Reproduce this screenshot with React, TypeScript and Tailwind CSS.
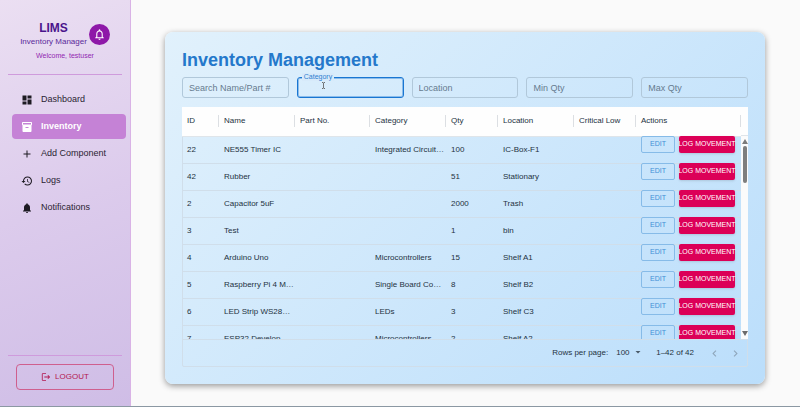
import React from 'react';
import {
  MdAdd,
  MdArrowDropDown,
  MdChevronLeft,
  MdChevronRight,
  MdDashboard,
  MdHistory,
  MdInventory2,
  MdLogout,
  MdNotifications,
  MdNotificationsNone,
} from 'react-icons/md';

type NavEntry = { label: string; icon: React.ReactNode; active?: boolean };

const navEntries: NavEntry[] = [
  { label: 'Dashboard', icon: <MdDashboard /> },
  { label: 'Inventory', icon: <MdInventory2 />, active: true },
  { label: 'Add Component', icon: <MdAdd /> },
  { label: 'Logs', icon: <MdHistory /> },
  { label: 'Notifications', icon: <MdNotifications /> },
];

const columns = [
  { label: 'ID', width: 'w-[37px]' },
  { label: 'Name', width: 'w-[76px]' },
  { label: 'Part No.', width: 'w-[75px]' },
  { label: 'Category', width: 'w-[76px]' },
  { label: 'Qty', width: 'w-[52px]' },
  { label: 'Location', width: 'w-[76px]' },
  { label: 'Critical Low', width: 'w-[62px]' },
  { label: 'Actions', width: 'w-[105px]' },
];

type Item = { id: number; name: string; category: string; qty: number; location: string };

const items: Item[] = [
  { id: 22, name: 'NE555 Timer IC', category: 'Integrated Circuit…', qty: 100, location: 'IC-Box-F1' },
  { id: 42, name: 'Rubber', category: '', qty: 51, location: 'Stationary' },
  { id: 2, name: 'Capacitor 5uF', category: '', qty: 2000, location: 'Trash' },
  { id: 3, name: 'Test', category: '', qty: 1, location: 'bin' },
  { id: 4, name: 'Arduino Uno', category: 'Microcontrollers', qty: 15, location: 'Shelf A1' },
  { id: 5, name: 'Raspberry Pi 4 M…', category: 'Single Board Co…', qty: 8, location: 'Shelf B2' },
  { id: 6, name: 'LED Strip WS28…', category: 'LEDs', qty: 3, location: 'Shelf C3' },
  { id: 7, name: 'ESP32 Develop…', category: 'Microcontrollers', qty: 2, location: 'Shelf A2' },
];

function Sidebar() {
  return (
    <aside className="flex w-[131px] shrink-0 flex-col border-r border-[#d9b3e6] bg-linear-160 from-[#ebdff2] via-[#dccbec] to-[#cfbde6]">
      <header className="mx-2 flex flex-col items-center border-b border-[#cf9bdc] pt-5 pb-3">
        <div className="flex items-center gap-[2px]">
          <div className="text-center">
            <div className="text-[12px] leading-4 font-bold text-[#4a148c]">LIMS</div>
            <div className="text-[8px] leading-3 text-[#5a2a9a]">Inventory Manager</div>
          </div>
          <button
            type="button"
            aria-label="Notifications"
            className="flex size-[21px] items-center justify-center rounded-full bg-[#8e18a8] text-[13px] text-white"
          >
            <MdNotificationsNone />
          </button>
        </div>
        <p className="mt-[2px] text-[7px] leading-3 text-[#9227b0]">Welcome, testuser</p>
      </header>
      <nav className="flex flex-col gap-[2px] pt-3 pr-1 pl-3">
        {navEntries.map((entry) => (
          <a
            key={entry.label}
            href="#"
            className={
              entry.active
                ? 'flex h-[25px] items-center gap-2 rounded bg-[#c582d6] px-[9px] pt-px text-[9px] font-bold text-white'
                : 'flex h-[25px] items-center gap-2 rounded px-[9px] pt-px text-[9px] text-[#2b2433]'
            }
          >
            <span className={entry.active ? 'text-[12px] text-white' : 'text-[12px] text-[#1d1a22]'}>{entry.icon}</span>
            {entry.label}
          </a>
        ))}
      </nav>
      <footer className="mx-2 mt-auto border-t border-[#cf9bdc] px-2 pt-2 pb-4">
        <button
          type="button"
          className="flex h-[26px] w-full items-center justify-center gap-1 rounded border border-[#cf5f8e] text-[8px] text-[#b3164f]"
        >
          <MdLogout className="text-[10px]" />
          LOGOUT
        </button>
      </footer>
    </aside>
  );
}

function FilterField({ label, focused }: { label: string; focused?: boolean }) {
  if (focused) {
    return (
      <label className="relative block">
        <span className="absolute -top-1 left-[5px] bg-[#d7eafa] px-[2px] text-[7px] leading-2 text-[#2f7fd1]">{label}</span>
        <input
          type="text"
          className="block h-[21px] w-full cursor-text rounded-[3px] border border-[#1976d2] px-[6px] text-[9px] ring-1 ring-[#1976d2]/40 outline-none ring-inset"
        />
        <svg viewBox="0 0 5 7" className="absolute top-[5px] left-[24px] h-[7px] w-[5px]" fill="none" stroke="#555" strokeWidth="0.8">
          <path d="M1 .5h1l.5.5.5-.5h1M2.500 1v5M1 6.500h1l.5-.5.5.5h1" />
        </svg>
      </label>
    );
  }
  return (
    <input
      type="text"
      aria-label={label}
      placeholder={label}
      className="block h-[21px] w-full min-w-0 rounded-[3px] border border-[#b1c8da] px-[6px] text-[9px] text-[#243444] outline-none placeholder:text-[#667b8f]"
    />
  );
}

function InventoryTable() {
  return (
    <section className="rounded-[2px] border border-[#d0deea] text-[8px] text-[#24323f]">
      <div className="-mx-px -mt-px flex h-[232px] overflow-hidden">
        <table className="h-fit min-w-0 flex-1 table-fixed border-collapse">
          <thead>
            <tr className="h-[29px] border-b border-[#dfe5ea] bg-[#fefefe]">
              {columns.map((column) => (
                <th key={column.label} scope="col" className={`${column.width} p-0 text-left font-medium whitespace-nowrap`}>
                  <span className="block border-r border-[#dcdfe3] pl-[5px] leading-3">{column.label}</span>
                </th>
              ))}
            </tr>
          </thead>
          <tbody>
            {items.map((item) => (
              <tr key={item.id} className="h-[27px] border-b border-[#d0deea] whitespace-nowrap">
                <td className="p-0 pl-[5px]">{item.id}</td>
                <td className="p-0 pl-[5px]">{item.name}</td>
                <td className="p-0 pl-[5px]" />
                <td className="p-0 pl-[5px]">{item.category}</td>
                <td className="p-0 pl-[5px]">{item.qty}</td>
                <td className="p-0 pl-[5px]">{item.location}</td>
                <td className="p-0 pl-[5px]" />
                <td className="p-0 pl-[5px] align-top">
                  <div className="-mt-px flex gap-1">
                    <button
                      type="button"
                      className="flex h-[17px] w-[34px] items-center justify-center rounded-[2px] border border-[#86bbe8] text-[7px] text-[#3f8fd6]"
                    >
                      EDIT
                    </button>
                    <button
                      type="button"
                      className="flex h-[17px] w-[56px] items-center justify-center rounded-[2px] bg-[#dc0057] text-[7px] text-white shadow-sm"
                    >
                      LOG MOVEMENT
                    </button>
                  </div>
                </td>
              </tr>
            ))}
          </tbody>
        </table>
        <div className="flex w-[7px] shrink-0 flex-col">
          <div className="h-[29px] border-b border-[#dfe5ea] bg-[#fefefe]" />
          <div className="flex flex-1 flex-col items-center bg-[#fbfbfb] py-[3px]">
            <svg viewBox="0 0 6 5" className="h-[5px] w-[6px]" fill="#7b7b7b">
              <path d="M3 0l3 5H0z" />
            </svg>
            <div className="mt-[2px] h-[37px] w-1 rounded-full bg-[#7e7e7e]" />
            <svg viewBox="0 0 6 5" className="mt-auto h-[5px] w-[6px]" fill="#6b6b6b">
              <path d="M3 5l3-5H0z" />
            </svg>
          </div>
        </div>
      </div>
      <footer className="flex h-[27px] items-center justify-end border-t border-[#d0deea] pr-[5px]">
        <label htmlFor="page-size">Rows per page:</label>
        <div className="relative ml-2">
          <select id="page-size" className="block w-6 appearance-none bg-transparent text-[8px] outline-none">
            <option>100</option>
          </select>
          <MdArrowDropDown className="pointer-events-none absolute -top-px -right-1 text-[12px] text-[#4a5a68]" />
        </div>
        <span className="mr-[14px] ml-4">1–42 of 42</span>
        <button type="button" aria-label="Previous page" className="mr-2 text-[13px] text-[#8fa6ba]">
          <MdChevronLeft />
        </button>
        <button type="button" aria-label="Next page" className="text-[13px] text-[#8fa6ba]">
          <MdChevronRight />
        </button>
      </footer>
    </section>
  );
}

export default function App() {
  return (
    <div className="flex min-h-screen border-b border-[#8b98a3] bg-[#fafafa] font-['Liberation_Sans',Arial,sans-serif]">
      <Sidebar />
      <main className="min-w-0 flex-1 pt-8 pr-[35px] pb-[22px] pl-[34px]">
        <div className="rounded-lg bg-linear-135 from-[#e1f1fc] to-[#bbdefb] px-[17px] pt-4 pb-[17px] shadow-[0_2px_6px_rgba(0,0,0,0.4)]">
          <h1 className="text-[18px] leading-6 font-bold text-[#2478cb]">Inventory Management</h1>
          <div className="mt-[5px] mb-[9px] grid grid-cols-5 gap-2">
            <FilterField label="Search Name/Part #" />
            <FilterField label="Category" focused />
            <FilterField label="Location" />
            <FilterField label="Min Qty" />
            <FilterField label="Max Qty" />
          </div>
          <InventoryTable />
        </div>
      </main>
    </div>
  );
}
